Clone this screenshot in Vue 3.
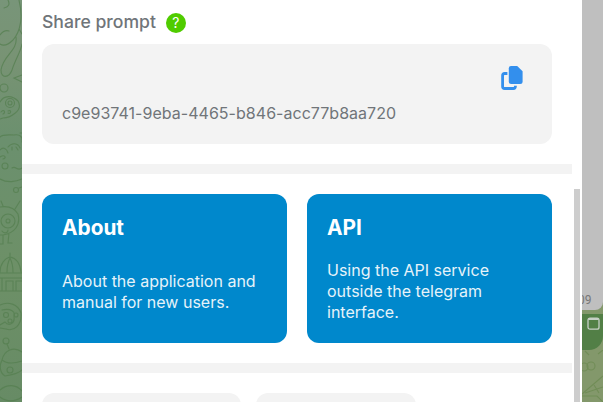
<script setup>
import { ref } from 'vue'

const token = ref('c9e93741-9eba-4465-b846-acc77b8aa720')
const cards = [
  { title: 'About', lines: ['About the application and', 'manual for new users.'] },
  { title: 'API', lines: ['Using the API service', 'outside the telegram', 'interface.'] },
]
</script>

<template>
  <div class="screen">
    <aside class="wallpaper">
      <svg width="22" height="402" viewBox="0 0 22 402" fill="none" stroke="#557f50" stroke-width="1.1" stroke-linecap="round">
        <path d="M19 0C23 16 21 31 13 40C8 45 3 46 0 44M8 0C10 4 9 7 4 8M0 35C3 31 6 30 9 31M16 37C18 51 3 55 1 70C1 79 9 78 12 70C15 60 21 51 22 44M22 34L19 29M22 75L14 78L22 82" />
        <circle cx="4" cy="88" r="4" />
        <path d="M0 102C4 95 12 95 18 101C24 111 9 118 3 118L0 119M1 112C4 108 6 113 3 114M8 111C12 109 11 115 8 113" />
        <circle cx="10" cy="103" r="4.5" /><circle cx="10" cy="103" r="2" />
        <path d="M0 137C3 134 8 135 14 135C20 134 23 137 22 142M0 179C7 183 16 182 22 179M8 147C12 142 18 143 20 148M12 147V150M16 147L18 150M0 150C3 146 7 149 8 153M0 157C5 154 7 158 3 159M12 168C16 165 17 172 22 168M20 133H22" />
        <circle cx="5" cy="166" r="3" /><circle cx="16" cy="190" r="2.5" /><path d="M19 188L22 187" />
        <path d="M0 207C6 206 14 207 18 214C21 226 14 233 3 235L0 235M15 209L20 201M3 206L1 201M3 235V244H0M9 233L8 243H12M2 231C4 234 8 233 8 230" />
        <circle cx="8" cy="221" r="7" /><circle cx="8" cy="221" r="2" />
        <path d="M0 272C0 264 5 258 10 257C16 258 20 263 21 272M10 257V253M0 273H22M0 278H22M0 291H22M2 278V291M6 291V281H13V291M16 291V281H22M7 272C7 266 9 260 10 258M13 272C13 266 11 260 10 258" />
        <path d="M0 305C8 301 18 304 21 313C22 325 14 332 6 329L0 328M2 310C10 308 16 311 14 317C15 323 9 327 5 322L0 325" />
        <circle cx="6" cy="315" r="2.5" /><circle cx="16" cy="315" r="2" /><circle cx="10" cy="321" r="2" />
        <circle cx="6" cy="341" r="3" /><path d="M7 344L9 349M2 360C4 350 14 346 22 352M2 360C8 365 16 363 22 361M2 360C-1 366 0 373 5 376C12 375 18 374 22 370" />
        <circle cx="10" cy="370" r="3" /><path d="M0 390C7 384 16 384 22 391M0 397C8 403 16 401 22 397" />
      </svg>
    </aside>

    <main class="panel">
      <div class="content">
        <section class="share">
          <h2 class="heading">Share prompt <span class="help">?</span></h2>
          <div class="token-box">
            <svg class="copy" width="24" height="26" viewBox="0 0 24 26">
              <path fill="#338fed" d="M11 1H17.2L22.6 6.3V16.5Q22.6 19 20.1 19H11.3Q8.8 19 8.8 16.5V3.2Q8.8 1 11 1Z" />
              <path fill="none" stroke="#338fed" stroke-width="2.8" d="M7.4 8.5H4.5Q2.6 8.5 2.6 10.4V21.5Q2.6 23.5 4.6 23.5H13.3Q15.4 23.5 15.4 21.2V20.7" />
            </svg>
            <p class="token">{{ token }}</p>
          </div>
        </section>
        <section class="cards">
          <article v-for="card in cards" :key="card.title" class="card">
            <h3>{{ card.title }}</h3>
            <p><span v-for="line in card.lines" :key="line">{{ line }}</span></p>
          </article>
        </section>
        <section class="pills">
          <div class="pill wide"></div>
          <div class="pill"></div>
        </section>
      </div>
      <div class="track"><div class="thumb"></div></div>
    </main>

    <aside class="chat">
      <div class="message"><span>09</span></div>
      <div class="action">
        <svg width="14" height="14" viewBox="0 0 14 14" fill="none" stroke="#c6cfc5">
          <rect x="1" y="1.2" width="11" height="11" rx="2" stroke-width="1.3" />
          <path d="M1.5 2H11.5" stroke-width="2" />
        </svg>
      </div>
      <svg class="doodle" width="21" height="52" viewBox="0 0 21 52" fill="none" stroke="#718d57" stroke-width="1.1">
        <circle cx="9" cy="16" r="4" /><circle cx="2" cy="17" r="4" />
        <path d="M3 1L7 5M16 4L21 0M0 44L21 26M3 43L21 37M0 46H15L21 52M12 35L17 43" />
      </svg>
    </aside>
  </div>
</template>

<style>
body { margin: 0; overflow: hidden; }
</style>

<style scoped>
.screen { display: flex; width: 603px; height: 402px; overflow: hidden; font-family: Inter, "Liberation Sans", sans-serif; background: #fff; }
.wallpaper { width: 22px; flex: none; background: linear-gradient(#789579 0, #789374 60px, #6b906e 140px, #6d9067 270px, #678b65 402px); }
.wallpaper svg { display: block; opacity: .75; }
.panel { width: 560px; flex: none; display: flex; background: #fff; }
.content { width: 550px; flex: none; }
.share { height: 164px; box-sizing: border-box; padding: 10px 20px 0; }
.heading { display: flex; align-items: center; height: 24px; margin: 0 0 10px; gap: 10px; font-size: 17.6px; font-weight: 500; line-height: 24px; color: #707579; }
.help { display: flex; align-items: center; justify-content: center; width: 20px; height: 20px; margin-top: 2px; border-radius: 50%; background: #50cc00; color: #fff; font-size: 14px; font-weight: 400; }
.token-box { display: flex; flex-direction: column; height: 100px; box-sizing: border-box; padding: 21px 28px 0 20px; border-radius: 12px; background: #f3f3f3; }
.copy { display: block; align-self: flex-end; }
.token { margin: 12px 0 0; color: #707579; font-size: 16px; line-height: 20px; letter-spacing: .03px; }
.cards { display: flex; gap: 20px; height: 149px; padding: 20px; border-top: 10px solid #f3f3f3; border-bottom: 10px solid #f3f3f3; }
.card { display: flex; flex-direction: column; width: 245px; box-sizing: border-box; padding: 20px; border-radius: 12px; background: #0088cc; color: #fff; }
.card h3 { margin: 0; font-size: 20.8px; line-height: 27px; font-weight: 700; }
.card p { display: flex; flex: 1; flex-direction: column; justify-content: center; margin: 19px 0 0; font-size: 16px; line-height: 20.8px; opacity: .9; white-space: nowrap; }
.pills { display: flex; gap: 15px; padding: 20px; }
.pill { width: 160px; height: 40px; border-radius: 12px; background: #f3f3f3; }
.pill.wide { width: 199px; }
.track { width: 6px; padding: 189px 0 0 2px; }
.thumb { width: 6px; height: 213px; background: #cdcdcd; }
.chat { display: flex; flex-direction: column; width: 21px; background: #83986b; overflow: hidden; }
.message { display: flex; flex: none; align-items: flex-end; height: 310px; box-sizing: border-box; padding-bottom: 3px; border-bottom-right-radius: 8px; background: #bfbfbf; color: #777; font-family: Roboto, sans-serif; font-size: 12px; line-height: 14px; }
.message span { margin-left: -4px; }
.action { display: flex; flex: none; height: 36px; margin-top: 4px; box-sizing: border-box; padding: 3px 0 0 5px; border-bottom-right-radius: 14px; background: #527f46; }
.doodle { display: block; }
</style>
